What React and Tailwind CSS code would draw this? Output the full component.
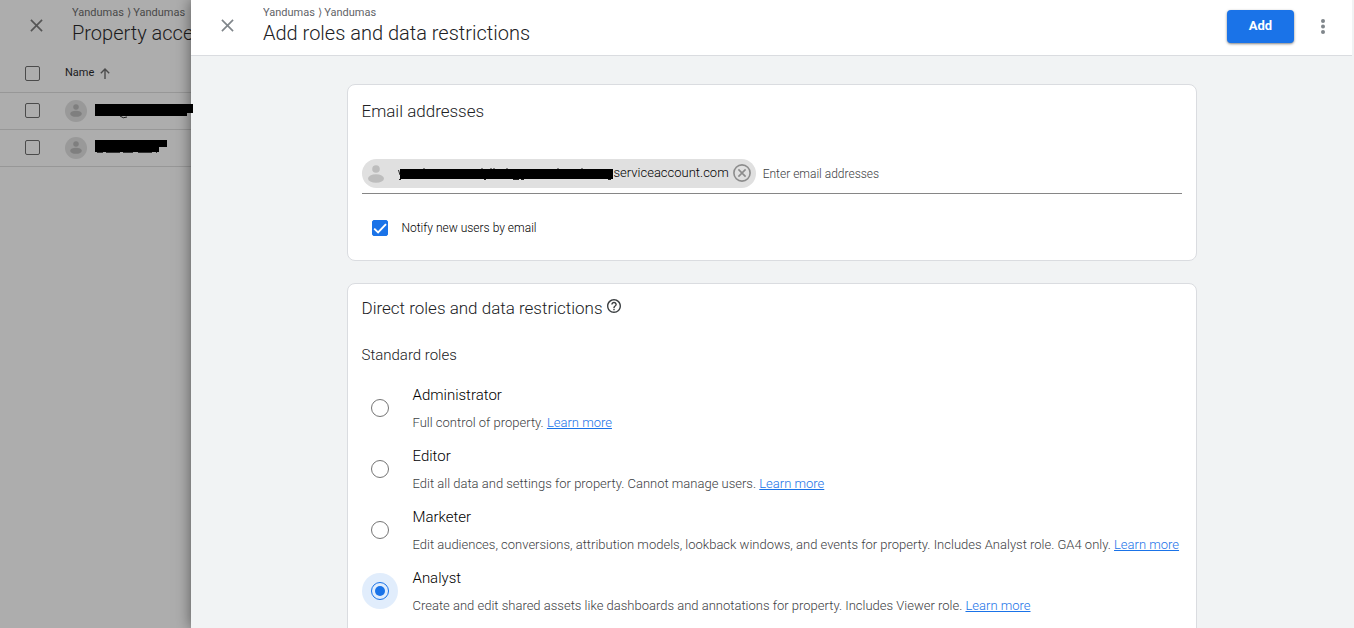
import { useState } from 'react';

const ROLES = [
  { id: 'administrator', name: 'Administrator', desc: 'Full control of property.' },
  { id: 'editor', name: 'Editor', desc: 'Edit all data and settings for property. Cannot manage users.' },
  {
    id: 'marketer',
    name: 'Marketer',
    desc: 'Edit audiences, conversions, attribution models, lookback windows, and events for property. Includes Analyst role. GA4 only.',
  },
  {
    id: 'analyst',
    name: 'Analyst',
    desc: 'Create and edit shared assets like dashboards and annotations for property. Includes Viewer role.',
  },
];

function CloseIcon({ className }) {
  return (
    <svg viewBox="0 0 14 14" className={className} fill="none" stroke="currentColor" strokeWidth="1.8">
      <path d="M1 1l12 12M13 1L1 13" />
    </svg>
  );
}

function PersonIcon({ className }) {
  return (
    <svg viewBox="0 0 16 18" className={className} fill="currentColor">
      <circle cx="8" cy="4" r="3.8" />
      <ellipse cx="8" cy="13.5" rx="8" ry="4.3" />
    </svg>
  );
}

function Heading({ crumbTone, titleTone, title }) {
  return (
    <div className="min-w-0 overflow-hidden whitespace-nowrap">
      <p className={`text-[11px] leading-4 ${crumbTone}`}>Yandumas ⟩ Yandumas</p>
      <h1 className={`text-xl leading-6 font-light ${titleTone}`}>{title}</h1>
    </div>
  );
}

function UserRow({ label, children }) {
  return (
    <li className="flex h-[37px] items-center border-b border-[#979797] pb-px pl-[25px]">
      <input
        type="checkbox"
        aria-label={label}
        className="size-[15px] shrink-0 appearance-none rounded-xs border border-[#4b4b4b]"
      />
      <span className="ml-[25px] flex size-[22px] shrink-0 items-center justify-center rounded-full bg-[#999999]">
        <PersonIcon className="h-[13px] w-3 text-[#7f7f7f]" />
      </span>
      {children}
    </li>
  );
}

function AccessSidebar() {
  return (
    <aside className="flex w-[191px] shrink-0 flex-col bg-[#adadad]">
      <div className="flex h-14 pt-[5px] pl-[30px]">
        <button type="button" aria-label="Close property access" className="mt-3.5 size-3 shrink-0 text-[#555555]">
          <CloseIcon className="size-[13px]" />
        </button>
        <div className="ml-[30px] min-w-0">
          <Heading crumbTone="text-[#494949]" titleTone="text-[#1b1b1c]" title="Property access" />
        </div>
      </div>
      <div className="flex h-[37px] items-center border-b border-[#979797] pb-px pl-[25px]">
        <input
          type="checkbox"
          aria-label="Select all users"
          className="size-[15px] shrink-0 appearance-none rounded-xs border border-[#4b4b4b]"
        />
        <button type="button" className="ml-[25px] flex items-center gap-1.5 text-[11px] text-[#1b1b1c]">
          Name
          <svg viewBox="0 0 10 11" className="h-[11px] w-2.5" fill="none" stroke="#4b4b4b" strokeWidth="1.4">
            <path d="M5 11V1.2M.8 5.2L5 1l4.2 4.2" />
          </svg>
        </button>
      </div>
      <ul>
        <UserRow label="Select first user">
          {/* hidden name, runs past the sidebar edge */}
          <svg viewBox="0 0 98 16" className="relative z-20 ml-2 h-4 w-[98px] shrink-0">
            <path d="M0 1h98v9h-6v3H0z" />
            <path d="M25 13q3 3 7 1" fill="none" stroke="#222" />
          </svg>
        </UserRow>
        <UserRow label="Select second user">
          <svg viewBox="0 0 72 16" className="relative z-20 ml-2 h-4 w-[72px] shrink-0">
            <path d="M0 0h72v7h-8v5H0z" />
            <path d="M2 12.5h6M11 12.5h14M28 12.5h10M43 12.5h14M61 12.5h1" stroke="#333" />
          </svg>
        </UserRow>
      </ul>
    </aside>
  );
}

function PanelHeader() {
  return (
    <header className="mr-0.5 flex h-14 shrink-0 border-b border-[#dadce0] bg-white pt-[5px] pl-[30px]">
      <button type="button" aria-label="Close" className="mt-3.5 size-3 shrink-0 text-[#80868b]">
        <CloseIcon className="size-[13px]" />
      </button>
      <div className="ml-[30px] flex-1">
        <Heading crumbTone="text-[#5f6368]" titleTone="text-[#202124]" title="Add roles and data restrictions" />
      </div>
      <button
        type="button"
        className="mt-[5px] h-[33px] w-[67px] rounded-sm bg-[#1a73e8] pb-0.5 text-[13px] font-bold text-white shadow-sm shadow-black/40"
      >
        Add
      </button>
      <button type="button" aria-label="More options" className="mt-3.5 mr-[27px] ml-[27px] h-4 w-1 text-[#80868b]">
        <svg viewBox="0 0 4 16" className="h-4 w-1" fill="currentColor">
          <circle cx="2" cy="2" r="2" />
          <circle cx="2" cy="7.5" r="2" />
          <circle cx="2" cy="13" r="2" />
        </svg>
      </button>
    </header>
  );
}

function EmailCard() {
  const [notify, setNotify] = useState(true);
  return (
    <section className="w-full max-w-[850px] rounded-lg border border-[#dadce0] bg-white px-3.5 pt-3.5 pb-6">
      <h2 className="text-[17px] leading-6 font-light text-[#202124]">Email addresses</h2>
      <div className="mt-9 flex items-center border-b border-[#868686] pb-[5px]">
        <div className="flex h-[29px] items-center rounded-full bg-[#e0e0e0] pr-[5px] pl-1.5 text-[13px] font-light text-black">
          <PersonIcon className="h-[18px] w-4 text-[#bdbdbd]" />
          {/* hidden part of the address */}
          <svg viewBox="0 0 214 12" className="ml-4 h-3 w-[214px] overflow-visible">
            <path d="M0 1h213v10H0z" />
            <path
              d="M-1.5 2l1.5 5M-1 11.5h2M24 0v1M82 0v1M91 0v1M94 0v1M107 0v1M158 0v1M182 0v1M84 11.5h2M113 11.5h6M121 11.5h3M208 11.5h3"
              stroke="#222"
            />
          </svg>
          <span className="pb-0.5">serviceaccount.com</span>
          <button type="button" aria-label="Remove email address" className="ml-1 pb-px text-[#8c8c8c]">
            <svg viewBox="0 0 18 18" className="size-[18px]" fill="none" stroke="currentColor" strokeWidth="1.6">
              <circle cx="9" cy="9" r="8.1" />
              <path d="M5.4 5.4l7.2 7.2M12.6 5.4l-7.2 7.2" />
            </svg>
          </button>
        </div>
        <input
          type="text"
          aria-label="Email addresses"
          placeholder="Enter email addresses"
          className="ml-[7px] min-w-0 flex-1 text-xs font-light outline-none placeholder:text-[#3c4043]"
        />
      </div>
      <label className="mt-[26px] ml-2.5 flex h-4 w-fit items-center gap-3.5 text-xs font-light text-black">
        <span className="relative size-4">
          <input
            type="checkbox"
            checked={notify}
            onChange={() => setNotify(!notify)}
            className="block size-4 appearance-none rounded-xs border border-[#5f6368] checked:border-[#1a73e8] checked:bg-[#1a73e8]"
          />
          {notify && (
            <svg viewBox="0 0 16 16" className="pointer-events-none absolute inset-0" fill="none" stroke="#fff" strokeWidth="1.9">
              <path d="M2.2 8.6l3.9 3.9 7.9-8.4" />
            </svg>
          )}
        </span>
        Notify new users by email
      </label>
    </section>
  );
}

function RoleOption({ role, selected, onSelect }) {
  return (
    <li className="flex items-center gap-[15px]">
      <span className={`flex size-9 shrink-0 items-center justify-center rounded-full ${selected ? 'bg-[#e1edfc]' : ''}`}>
        <input
          type="radio"
          name="role"
          id={role.id}
          checked={selected}
          onChange={() => onSelect(role.id)}
          className="size-[18px] appearance-none rounded-full border border-[#757575] checked:border-[#1a73e8] checked:bg-[#1a73e8] checked:bg-clip-content checked:p-[3px]"
        />
      </span>
      <div className="pt-1">
        <label htmlFor={role.id} className="block text-[15px] leading-6 font-light text-black">
          {role.name}
        </label>
        <p className="mt-0.5 text-[13px] leading-7 font-light text-[#3c4043]">
          {role.desc}{' '}
          <a href="#" className="text-[#1a73e8] underline">
            Learn more
          </a>
        </p>
      </div>
    </li>
  );
}

function RolesCard() {
  const [role, setRole] = useState('analyst');
  return (
    <section className="w-full max-w-[850px] rounded-lg border border-[#dadce0] bg-white px-3.5 pt-3 pb-6">
      <div className="flex gap-1">
        <h2 className="text-[17px] leading-6 font-light text-[#202124]">Direct roles and data restrictions</h2>
        <button type="button" aria-label="Help" className="mt-[3px] size-3.5 text-[#3c4043]">
          <svg viewBox="2 2 20 20" className="size-3.5" fill="currentColor">
            <path d="M11 18h2v-2h-2v2zm1-16C6.48 2 2 6.48 2 12s4.48 10 10 10 10-4.48 10-10S17.52 2 12 2zm0 18c-4.41 0-8-3.59-8-8s3.59-8 8-8 8 3.59 8 8-3.59 8-8 8zm0-14c-2.21 0-4 1.79-4 4h2c0-1.1.9-2 2-2s2 .9 2 2c0 2-3 1.75-3 5h2c0-2.25 3-2.5 3-5 0-2.21-1.79-4-4-4z" />
          </svg>
        </button>
      </div>
      <h3 className="mt-[23px] text-[15px] leading-6 font-light text-[#202124]">Standard roles</h3>
      <ul className="mt-3 flex flex-col gap-[3px]">
        {ROLES.map(r => (
          <RoleOption key={r.id} role={r} selected={r.id === role} onSelect={setRole} />
        ))}
      </ul>
    </section>
  );
}

export default function App() {
  return (
    <div className="flex h-screen overflow-hidden bg-[#adadad] font-['Roboto',sans-serif]">
      <AccessSidebar />
      <div className="relative z-10 flex min-w-0 flex-1 flex-col bg-[#f1f3f4] shadow-[0_0_14px_rgba(0,0,0,0.5)]">
        <PanelHeader />
        <main className="flex flex-1 flex-col items-center gap-[22px] overflow-hidden pt-7 pr-0.5 *:shrink-0">
          <EmailCard />
          <RolesCard />
        </main>
      </div>
    </div>
  );
}
